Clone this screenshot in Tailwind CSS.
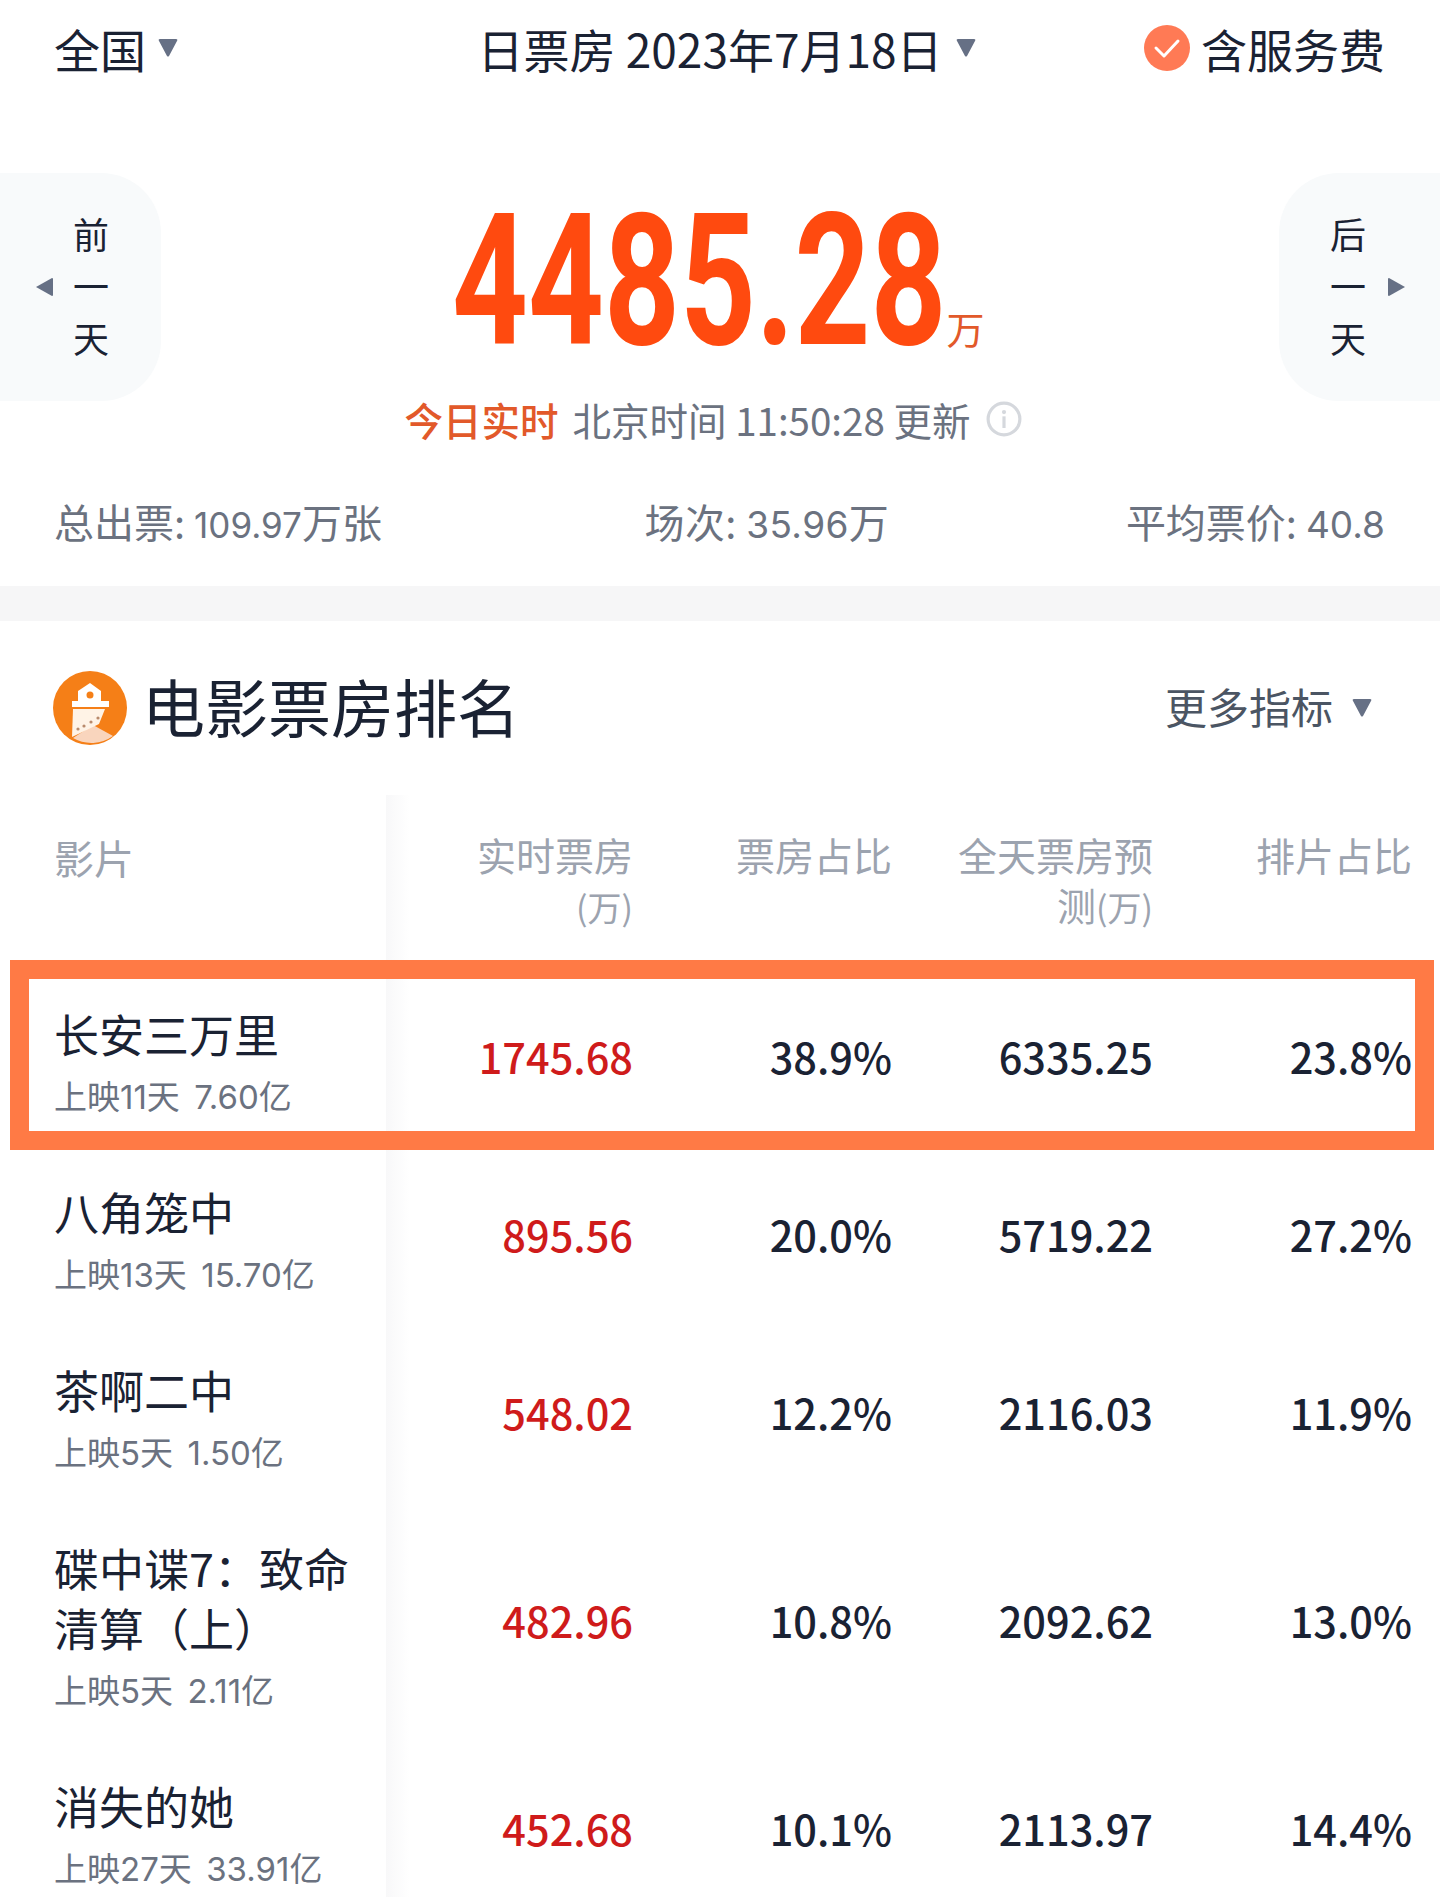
<!DOCTYPE html>
<html lang="zh-CN">
<head>
    <meta charset="UTF-8">
    <meta name="viewport" content="width=device-width, initial-scale=1.0">
    <title>电影票房排名</title>
    <script src="https://cdn.jsdelivr.net/npm/@tailwindcss/browser@4"></script>
</head>
<body class="bg-white font-['Noto_Sans_CJK_SC','Noto_Sans',sans-serif] text-[#1a2233] w-[1440px] h-[1897px] overflow-hidden relative">
    <!-- Top bar -->
    <div class="flex items-center justify-between h-[100px] pb-[5px] pl-[54px] pr-[55px] text-[46px] leading-none">
        <div class="flex items-center gap-[12px] w-[320px]">
            <span>全国</span>
            <svg class="w-5 h-[18px]" viewBox="0 0 20 18"><path d="M1 2 Q0 0 2 0 H18 Q20 0 19 2 L11 17 Q10 18 9 17 Z" fill="#667085"/></svg>
        </div>
        <div class="flex items-center gap-[13px] ml-[14px]">
            <span>日票房 2023年7月18日</span>
            <svg class="w-5 h-[18px]" viewBox="0 0 20 18"><path d="M1 2 Q0 0 2 0 H18 Q20 0 19 2 L11 17 Q10 18 9 17 Z" fill="#667085"/></svg>
        </div>
        <div class="flex items-center justify-end gap-[11px] w-[320px]">
            <svg class="w-[46px] h-[46px]" viewBox="0 0 46 46"><circle cx="23" cy="23" r="23" fill="#ff7a55"/><path d="M12 23 L20 31 L34 16" fill="none" stroke="#fff" stroke-width="3" stroke-linecap="round" stroke-linejoin="round"/></svg>
            <span>含服务费</span>
        </div>
    </div>

    <!-- Hero -->
    <div class="flex items-start justify-between mt-[73px] h-[271px]">
        <div class="flex items-center w-[161px] h-[228px] bg-[#f8fafb] rounded-r-[60px]">
            <svg class="w-[17px] h-[18px] ml-[36px]" viewBox="0 0 17 18"><path d="M0 9 L16 0 Q17 0 17 1 V17 Q17 18 16 18 Z" fill="#667085"/></svg>
            <div class="flex flex-col items-center ml-[20px] pb-[5px] text-[36px] leading-[52px]"><span>前</span><span>一</span><span>天</span></div>
        </div>
        <div class="flex flex-col items-center">
            <div class="flex items-end h-[221px] pb-[47px] -ml-[3px]">
                <div class="w-[494px] h-[136px] pt-[4px] flex items-center">
                    <span class="inline-block origin-left scale-x-[0.72] text-[184px] leading-none font-bold whitespace-nowrap text-[#ff4a0f] font-['Roboto',sans-serif]">4485.28</span>
                </div>
                <span class="text-[38px] leading-none text-[#e2592a]">万</span>
            </div>
            <div class="flex items-center h-[50px] mr-[13px] text-[38.5px] leading-none text-[#6b7280]">
                <span class="text-[#e2592a] font-medium mr-[14px]">今日实时</span>
                <span>北京时间 11:50:28 更新</span>
                <svg class="w-[36px] h-[36px] ml-[16px]" viewBox="0 0 34 34"><circle cx="17" cy="17" r="15" fill="none" stroke="#d5d8dd" stroke-width="3"/><circle cx="17" cy="10.5" r="2" fill="#d5d8dd"/><rect x="15.5" y="14.5" width="3" height="11" fill="#d5d8dd"/></svg>
            </div>
        </div>
        <div class="flex items-center justify-end w-[161px] h-[228px] bg-[#f8fafb] rounded-l-[60px]">
            <div class="flex flex-col items-center pb-[5px] text-[36px] leading-[52px]"><span>后</span><span>一</span><span>天</span></div>
            <svg class="w-[17px] h-[18px] ml-[22px] mr-[35px]" viewBox="0 0 17 18"><path d="M17 9 L1 0 Q0 0 0 1 V17 Q0 18 1 18 Z" fill="#667085"/></svg>
        </div>
    </div>

    <!-- Stats -->
    <div class="h-[60px] mt-[48px] pl-[54px] pr-[55px] flex items-center justify-between text-[40px] leading-none text-[#6b7280]">
        <span>总出票: <span class="text-[35px] font-['Inter',sans-serif]">109.97</span>万张</span>
        <span class="ml-[26px] tracking-[0.4px]">场次: <span class="text-[37px] font-['Inter',sans-serif]">35.96</span>万</span>
        <span>平均票价: <span class="text-[37px] font-['Inter',sans-serif]">40.8</span></span>
    </div>

    <div class="h-[35px] mt-[34px] bg-[#f6f6f7]"></div>

    <!-- Section title -->
    <div class="flex items-center justify-between h-[174px] pl-[53px] pr-[68px]">
        <div class="flex items-center gap-[15px]">
            <svg class="w-[74px] h-[74px]" viewBox="0 0 74 74">
                <circle cx="37" cy="37" r="37" fill="#f57f17"/>
                <path d="M20 67 L40 54 L60 65 A37 37 0 0 1 20 67 Z" fill="#f9d5bd"/>
                <path d="M37 12 L48 20 V30 H56 V36 H19 V30 H25 V20 Z" fill="#fff"/>
                <circle cx="37" cy="24" r="3.5" fill="#f57f17"/>
                <path d="M20 38 H52 L46 53 L19 66 Z" fill="#fff3e6"/>
                <g fill="#b98a6c"><circle cx="25" cy="58" r="1.6"/><circle cx="31" cy="55" r="1.6"/><circle cx="38" cy="51" r="1.6"/><circle cx="45" cy="47" r="1.6"/></g>
            </svg>
            <span class="text-[63px] leading-none -mt-[8px]">电影票房排名</span>
        </div>
        <div class="flex items-center gap-[19px] text-[42px] leading-none text-[#4b5563]">
            <span class="-mt-[4px]">更多指标</span>
            <svg class="w-5 h-[18px]" viewBox="0 0 20 18"><path d="M1 2 Q0 0 2 0 H18 Q20 0 19 2 L11 17 Q10 18 9 17 Z" fill="#667085"/></svg>
        </div>
    </div>

    <!-- Table -->
    <div class="relative">
        <div class="absolute left-[386px] top-0 bottom-0 w-[24px] bg-gradient-to-r from-[#f8f8f9] to-white"></div>

        <div class="relative flex h-[176px] pt-[34px] text-[39px] leading-[50px] text-[#9ca3af] text-right">
            <div class="w-[386px] pl-[54px] pt-[3px] text-left text-[40px]">影片</div>
            <div class="w-[247px]">实时票房<br><span class="text-[34px]">(万)</span></div>
            <div class="w-[259px]">票房占比</div>
            <div class="w-[261px] pl-[60px]">全天票房预<br>测<span class="text-[34px]">(万)</span></div>
            <div class="w-[259px]">排片占比</div>
        </div>

        <div class="relative flex items-center h-[178px] text-[41.5px] leading-none text-right font-medium">
            <div class="w-[386px] pl-[54px] text-left font-normal"><div class="text-[45px] leading-[60px] mt-[3px]">长安三万里</div><div class="text-[33px] leading-[44px] text-[#6b7280] mt-[9px]">上映<span class="text-[33px] font-['Inter',sans-serif]">11</span>天 <span class="ml-[7px] text-[33px] font-['Inter',sans-serif]">7.60</span>亿</div></div>
            <div class="w-[247px] -mt-[7px] text-[#cf1b1b]">1745.68</div>
            <div class="w-[259px] -mt-[7px]">38.9%</div>
            <div class="w-[261px] -mt-[7px]">6335.25</div>
            <div class="w-[259px] -mt-[7px]">23.8%</div>
        </div>

        <div class="relative flex items-center h-[178px] text-[41.5px] leading-none text-right font-medium">
            <div class="w-[386px] pl-[54px] text-left font-normal"><div class="text-[45px] leading-[60px] mt-[3px]">八角笼中</div><div class="text-[33px] leading-[44px] text-[#6b7280] mt-[9px]">上映<span class="text-[33px] font-['Inter',sans-serif]">13</span>天 <span class="ml-[7px] text-[33px] font-['Inter',sans-serif]">15.70</span>亿</div></div>
            <div class="w-[247px] -mt-[7px] text-[#cf1b1b]">895.56</div>
            <div class="w-[259px] -mt-[7px]">20.0%</div>
            <div class="w-[261px] -mt-[7px]">5719.22</div>
            <div class="w-[259px] -mt-[7px]">27.2%</div>
        </div>

        <div class="relative flex items-center h-[178px] text-[41.5px] leading-none text-right font-medium">
            <div class="w-[386px] pl-[54px] text-left font-normal"><div class="text-[45px] leading-[60px] mt-[3px]">茶啊二中</div><div class="text-[33px] leading-[44px] text-[#6b7280] mt-[9px]">上映<span class="text-[33px] font-['Inter',sans-serif]">5</span>天 <span class="ml-[7px] text-[33px] font-['Inter',sans-serif]">1.50</span>亿</div></div>
            <div class="w-[247px] -mt-[7px] text-[#cf1b1b]">548.02</div>
            <div class="w-[259px] -mt-[7px]">12.2%</div>
            <div class="w-[261px] -mt-[7px]">2116.03</div>
            <div class="w-[259px] -mt-[7px]">11.9%</div>
        </div>

        <div class="relative flex items-center h-[238px] text-[41.5px] leading-none text-right font-medium">
            <div class="w-[386px] pl-[54px] text-left font-normal"><div class="text-[45px] leading-[60px] w-[310px] mt-[3px]">碟中谍7：致命清算（上）</div><div class="text-[33px] leading-[44px] text-[#6b7280] mt-[9px]">上映<span class="text-[33px] font-['Inter',sans-serif]">5</span>天 <span class="ml-[7px] text-[33px] font-['Inter',sans-serif]">2.11</span>亿</div></div>
            <div class="w-[247px] -mt-[7px] text-[#cf1b1b]">482.96</div>
            <div class="w-[259px] -mt-[7px]">10.8%</div>
            <div class="w-[261px] -mt-[7px]">2092.62</div>
            <div class="w-[259px] -mt-[7px]">13.0%</div>
        </div>

        <div class="relative flex items-center h-[178px] text-[41.5px] leading-none text-right font-medium">
            <div class="w-[386px] pl-[54px] text-left font-normal"><div class="text-[45px] leading-[60px] mt-[3px]">消失的她</div><div class="text-[33px] leading-[44px] text-[#6b7280] mt-[9px]">上映<span class="text-[33px] font-['Inter',sans-serif]">27</span>天 <span class="ml-[7px] text-[33px] font-['Inter',sans-serif]">33.91</span>亿</div></div>
            <div class="w-[247px] -mt-[7px] text-[#cf1b1b]">452.68</div>
            <div class="w-[259px] -mt-[7px]">10.1%</div>
            <div class="w-[261px] -mt-[7px]">2113.97</div>
            <div class="w-[259px] -mt-[7px]">14.4%</div>
        </div>

        <!-- highlight box drawn over the first row -->
        <div class="absolute left-[10px] top-[165px] w-[1424px] h-[190px] border-[19px] border-[#ff7a45]"></div>
    </div>
</body>
</html>
